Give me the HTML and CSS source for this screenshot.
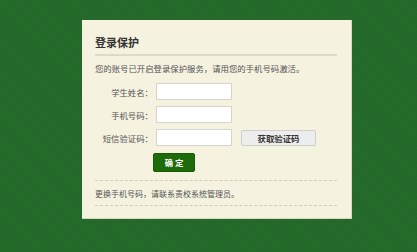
FILE: index.html
```html
<!DOCTYPE html>
<html lang="zh-CN">
<head>
    <meta charset="UTF-8">
    <title>登录保护</title>
    <link rel="stylesheet" href="styles.css">
</head>
<body>
    <div class="box">
        <h2>登录保护</h2>
        <p class="tip">您的账号已开启登录保护服务，请用您的手机号码激活。</p>
        <form class="form">
            <div class="row">
                <label>学生姓名：</label>
                <input type="text">
            </div>
            <div class="row">
                <label>手机号码：</label>
                <input type="text">
            </div>
            <div class="row">
                <label>短信验证码：</label>
                <input type="text">
                <button type="button" class="code-btn">获取验证码</button>
            </div>
            <div class="row">
                <label></label>
                <button type="button" class="ok-btn">确 定</button>
            </div>
        </form>
        <p class="note">更换手机号码，请联系贵校系统管理员。</p>
    </div>
</body>
</html>
```

FILE: styles.css
```css
body {
    margin: 0;
    height: 252px;
    background: #246b2b repeating-linear-gradient(45deg, rgba(0,0,0,0.03) 0 1px, transparent 1px 3px);
    font-family: "Noto Sans CJK SC", sans-serif;
    font-size: 8.4px;
    color: #555;
    padding-top: 20px;
    box-sizing: border-box;
}

.box {
    width: 270px;
    height: 199px;
    margin-left: 82px;
    box-sizing: border-box;
    background: #f5f2e0;
    border-right: 1px solid #d9d7c2;
    border-bottom: 1px solid #d9d7c2;
    padding: 13px 14px 0 13px;
}

.box h2 {
    margin: 0;
    font-size: 11px;
    font-weight: bold;
    color: #333;
    line-height: 18px;
    padding-bottom: 3px;
    border-bottom: 2px solid #dcdad0;
}

.tip {
    margin: 5px 0 8px;
    line-height: 14px;
}

.form {
    margin: 0;
}

.row {
    display: flex;
    align-items: center;
    height: 17px;
    margin-bottom: 6px;
}

.row label {
    width: 58px;
    text-align: right;
    padding-right: 3px;
    color: #555;
}

.row input {
    width: 76px;
    height: 17px;
    box-sizing: border-box;
    border: 1px solid #d6d4cc;
    background: #fff;
    padding: 0 3px;
    margin: 0;
}

.code-btn {
    margin-left: 9px;
    width: 75px;
    height: 16px;
    padding: 0;
    border: 1px solid #cfcfcf;
    border-radius: 2px;
    background: #eeeded;
    font-family: inherit;
    font-size: 8.4px;
    font-weight: bold;
    color: #333;
}

.ok-btn {
    margin-left: -3px;
    margin-top: 3px;
    width: 42px;
    height: 19px;
    padding: 0;
    border: 1px solid #165a07;
    border-radius: 2px;
    background: #1d6b0b;
    font-family: inherit;
    font-size: 8.4px;
    font-weight: bold;
    color: #fff;
}

.note {
    margin: 11px 0 0;
    padding: 6px 0 5px;
    line-height: 13px;
    font-size: 8px;
    border-top: 1px dashed #cfccc0;
    border-bottom: 1px dashed #cfccc0;
}
```
